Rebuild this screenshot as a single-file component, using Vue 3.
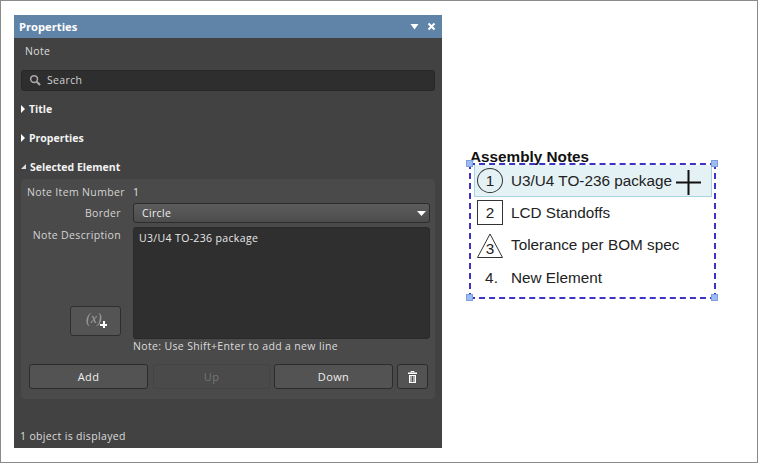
<script setup>
const notes = [
  { id: 1, text: 'U3/U4 TO-236 package', kind: 'circle', active: true },
  { id: 2, text: 'LCD Standoffs', kind: 'square' },
  { id: 3, text: 'Tolerance per BOM spec', kind: 'triangle' },
  { id: 4, text: 'New Element', kind: 'plain' }
]
</script>

<template>
  <div class="page">
    <section class="panel">
      <header class="titlebar">
        <span>Properties</span>
        <div class="tb-icons">
          <svg width="9" height="7" viewBox="0 0 9 7"><path d="M0.5 1H8.5L4.5 6.5Z" fill="#fff" /></svg>
          <svg width="9" height="9" viewBox="0 0 9 9"><path d="M1.5 1.5L7.5 7.5M7.5 1.5L1.5 7.5" stroke="#fff" stroke-width="2" /></svg>
        </div>
      </header>
      <div class="kind">Note</div>
      <div class="search">
        <svg width="12" height="12" viewBox="0 0 13 13"><circle cx="5.5" cy="5.5" r="3.7" fill="none" stroke="#a8a8a8" stroke-width="1.7" /><path d="M8.3 8.3L12 12" stroke="#a8a8a8" stroke-width="2.2" /></svg>
        <span>Search</span>
      </div>
      <div class="section first"><i class="tri closed"></i><span>Title</span></div>
      <div class="section"><i class="tri closed"></i><span>Properties</span></div>
      <div class="section"><i class="tri open"></i><span>Selected Element</span></div>
      <div class="group">
        <div class="form">
          <label class="lab">Note Item Number</label>
          <div class="val">1</div>
          <label class="lab border-lab">Border</label>
          <div class="select">
            <span>Circle</span>
            <svg width="9" height="5" viewBox="0 0 9 5"><path d="M0 0H9L4.5 5Z" fill="#fff" /></svg>
          </div>
          <div class="left-col">
            <label class="lab">Note Description</label>
            <button class="fx"><em>(x)</em><b></b></button>
          </div>
          <div class="area">U3/U4 TO-236 package</div>
          <div></div>
          <div class="hint">Note: Use Shift+Enter to add a new line</div>
        </div>
        <div class="actions">
          <button class="btn add">Add</button>
          <button class="btn up" disabled>Up</button>
          <button class="btn down">Down</button>
          <button class="btn trash">
            <svg width="9" height="12" viewBox="0 0 9 12">
              <path d="M3 1.5V0.5H6V1.5" fill="none" stroke="#fff" stroke-width="1" />
              <rect x="0" y="1.5" width="9" height="1.5" fill="#fff" />
              <path d="M1 4H8V12H1ZM2.5 5V11H3.5V5ZM4 5V11H5V5ZM5.5 5V11H6.5V5Z" fill="#fff" fill-rule="evenodd" />
            </svg>
          </button>
        </div>
      </div>
      <footer class="status">1 object is displayed</footer>
    </section>

    <section class="canvas">
      <h3>Assembly Notes</h3>
      <div class="selection">
        <i class="handle tl"></i><i class="handle tr"></i><i class="handle bl"></i><i class="handle br"></i>
        <div v-for="n in notes" :key="n.id" class="note" :class="[n.kind, { active: n.active }]">
          <div class="badge">
            <svg v-if="n.kind === 'triangle'" class="tri-shape" width="26" height="25" viewBox="0 0 26 25"><path d="M13 1L25.5 24.5H0.5Z" fill="none" stroke="#333" stroke-width="1" /></svg>
            <span>{{ n.id }}<template v-if="n.kind === 'plain'">.</template></span>
          </div>
          <span class="txt">{{ n.text }}</span>
        </div>
        <svg class="cross" width="25" height="25" viewBox="0 0 25 25"><path d="M0 12.5H25M12.5 0V25" stroke="#111" stroke-width="2" /></svg>
      </div>
    </section>
  </div>
</template>

<style scoped>
.page {
  box-sizing: border-box;
  width: 758px;
  height: 463px;
  border: 1px solid #8a8a8a;
  background: #fff;
  display: flex;
  align-items: flex-start;
  padding: 14px 0 0 13px;
  font-family: "Open Sans", "Noto Sans", sans-serif;
  overflow: hidden;
}
.panel {
  box-sizing: border-box;
  width: 428px;
  height: 433px;
  background: #424242;
  color: #dcdcdc;
  font-size: 10.5px;
  letter-spacing: 0.35px;
  display: flex;
  flex-direction: column;
  flex: none;
}
.titlebar {
  box-sizing: border-box;
  height: 23px;
  flex: none;
  background: #5f84a8;
  color: #fff;
  font-weight: 700;
  font-size: 11.2px;
  letter-spacing: 0;
  display: flex;
  align-items: center;
  justify-content: space-between;
  padding: 0 6px 1px 5px;
}
.tb-icons { display: flex; align-items: center; gap: 8px; }
.kind { padding: 6px 0 0 11px; height: 16px; line-height: 14px; }
.search {
  box-sizing: border-box;
  margin: 10px 7px 0;
  height: 21px;
  background: #2e2e2e;
  border: 1px solid #282828;
  border-radius: 3px;
  display: flex;
  align-items: center;
  gap: 6px;
  padding: 0 7px 1px;
  color: #d0d0d0;
}
.section {
  display: flex;
  align-items: center;
  gap: 4px;
  height: 15px;
  margin-top: 14px;
  padding-left: 7px;
  color: #f2f2f2;
  font-weight: 700;
  letter-spacing: 0;
}
.section.first { margin-top: 10px; }
.tri { display: block; width: 0; height: 0; flex: none; }
.tri.closed { border-left: 4px solid #fff; border-top: 4px solid transparent; border-bottom: 4px solid transparent; }
.tri.open { border-right: 5px solid #ddd; border-top: 5px solid transparent; }
.group {
  box-sizing: border-box;
  margin: 5px 7px 0;
  height: 220px;
  background: #4a4a4a;
  border-radius: 4px;
  padding: 5px 5px 0 6px;
}
.form {
  display: grid;
  grid-template-columns: 94px 297px;
  column-gap: 12px;
  row-gap: 4px;
  align-items: start;
}
.lab { display: block; text-align: right; line-height: 16px; color: #d4d4d4; white-space: nowrap; }
.border-lab { padding-top: 1px; }
.val { line-height: 16px; color: #e4e4e4; }
.select {
  box-sizing: border-box;
  height: 20px;
  margin-top: -1px;
  border: 1px solid #2c2c2c;
  border-radius: 3px;
  background: linear-gradient(#5c5c5c, #4c4c4c);
  display: flex;
  align-items: center;
  justify-content: space-between;
  padding: 0 3px 0 8px;
  color: #eee;
}
.left-col { height: 112px; display: flex; flex-direction: column; justify-content: space-between; align-items: flex-end; padding-bottom: 3px; box-sizing: border-box; }
.fx {
  box-sizing: border-box;
  width: 51px;
  height: 30px;
  background: #545454;
  border: 1px solid #2e2e2e;
  border-radius: 3px;
  position: relative;
  padding: 0;
}
.fx em {
  position: absolute;
  left: 15px;
  top: 4px;
  font: italic 14px "Liberation Serif", serif;
  color: #a0a0a0;
}
.fx b {
  position: absolute;
  left: 29px;
  top: 14px;
  width: 7px;
  height: 7px;
  background:
    linear-gradient(#fff, #fff) center / 7px 2px no-repeat,
    linear-gradient(#fff, #fff) center / 2px 7px no-repeat;
}
.area {
  box-sizing: border-box;
  height: 112px;
  background: #2f2f2f;
  border: 1px solid #2a2a2a;
  border-radius: 3px;
  padding: 3px 5px;
  line-height: 14px;
  color: #e8e8e8;
}
.hint { margin-top: -4px; line-height: 14px; color: #dcdcdc; height: 14px; }
.actions { display: flex; margin-top: 11px; margin-left: 2px; }
.btn {
  box-sizing: border-box;
  height: 25px;
  width: 119px;
  background: #535353;
  border: 1px solid #2c2c2c;
  border-radius: 3px;
  color: #f0f0f0;
  font: inherit;
  letter-spacing: inherit;
  font-size: 11px;
  padding: 0;
  display: flex;
  align-items: center;
  justify-content: center;
}
.btn.up { width: 117px; margin-left: 5px; background: #4a4a4a; border-color: #444; color: #757575; }
.btn.down { margin-left: 4px; }
.btn.trash { width: 31px; margin-left: 4px; }
.status { margin-top: auto; padding: 0 0 5px 6px; line-height: 14px; }

.canvas { margin: 135px 0 0 27px; width: 250px; color: #222; font-family: "Liberation Sans", Arial, sans-serif; }
h3 { margin: 0; padding-left: 1px; font-size: 15.3px; line-height: 13px; height: 13px; font-weight: 700; color: #111; }
.selection {
  box-sizing: border-box;
  position: relative;
  width: 247px;
  height: 136px;
  border: 2px dashed #3c34c4;
  padding: 0 3px;
}
.handle { box-sizing: border-box; position: absolute; width: 7px; height: 7px; background: #9dbcf2; border: 1px solid #7d9fe0; }
.tl { left: -5px; top: -5px; }
.tr { right: -4px; top: -5px; }
.bl { left: -5px; bottom: -4px; }
.br { right: -4px; bottom: -4px; }
.note { height: 32.3px; display: flex; align-items: center; font-size: 15.3px; padding: 0 0 1px 3px; box-sizing: border-box; }
.note.active { background: #e4f1f5; box-shadow: inset 0 -1px 0 #a6d4e4, inset 1px 0 0 #a6d4e4, inset -1px 0 0 #a6d4e4; width: 238px; }
.badge { box-sizing: border-box; width: 26px; height: 25px; margin-right: 8px; position: relative; display: flex; align-items: center; justify-content: center; flex: none; font-size: 15.3px; }
.circle .badge { border: 1px solid #333; border-radius: 50%; }
.square .badge { border: 1px solid #333; }
.triangle .badge span { position: relative; padding-top: 8px; }
.plain .badge { padding-left: 3px; }
.tri-shape { position: absolute; left: 0; top: 0; }
.cross { position: absolute; left: 205px; top: 5px; }
</style>
